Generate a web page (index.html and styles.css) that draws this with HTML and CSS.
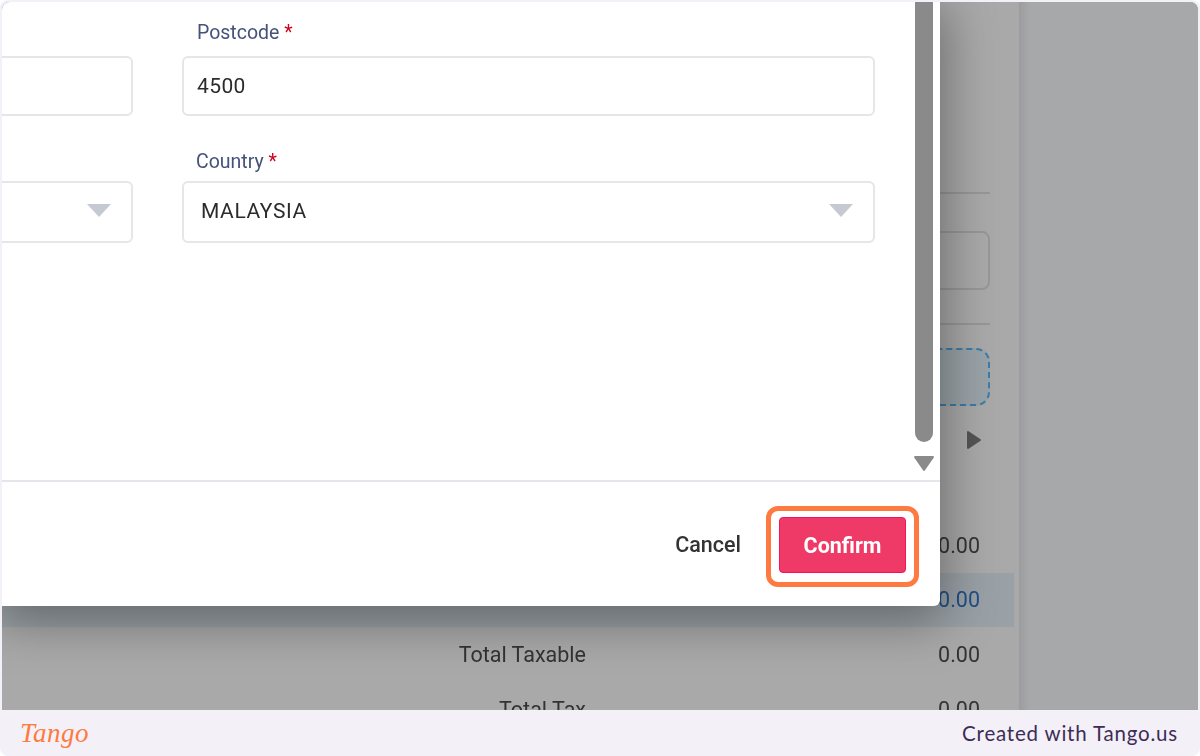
FILE: index.html
```html
<!DOCTYPE html>
<html lang="en">
<head>
<meta charset="utf-8">
<title>Confirm address</title>
<link rel="stylesheet" href="styles.css">
</head>
<body>
<div class="frame">
  <main class="shot">
    <section class="page">
      <div class="rule rule-first"></div>
      <div class="box"></div>
      <div class="rule rule-second"></div>
      <div class="dashed"></div>
      <div class="pager">
        <svg class="pager-arrow" width="16" height="20" viewBox="0 0 16 20"><path d="M2 2 L14 10 L2 18 Z" fill="#555" stroke="#555" stroke-width="2" stroke-linejoin="round"/></svg>
      </div>
      <div class="rows">
        <div class="row"><span class="row-label"></span><span class="row-value">0.00</span></div>
        <div class="row row-active"><span class="row-label"></span><span class="row-value">0.00</span></div>
        <div class="row"><span class="row-label">Total Taxable</span><span class="row-value">0.00</span></div>
        <div class="row"><span class="row-label">Total Tax</span><span class="row-value">0.00</span></div>
      </div>
    </section>
    <aside class="side"></aside>

    <section class="modal">
      <div class="modal-body">
        <div class="form">
          <div class="field field-first">
            <label class="label label-postcode">&nbsp;</label>
            <div class="input"></div>
          </div>
          <div class="field field-first">
            <label class="label label-postcode">Postcode <span class="req">*</span></label>
            <div class="input"><span class="value">4500</span></div>
          </div>
          <div class="field">
            <label class="label">&nbsp;</label>
            <div class="input input-select">
              <svg class="caret" width="24" height="14" viewBox="0 0 24 14"><path d="M0 0 H24 L12 13 Z" fill="#c4c9d2"/></svg>
            </div>
          </div>
          <div class="field">
            <label class="label label-country">Country <span class="req">*</span></label>
            <div class="input input-select">
              <span class="value value-select">MALAYSIA</span>
              <svg class="caret" width="24" height="14" viewBox="0 0 24 14"><path d="M0 0 H24 L12 13 Z" fill="#c4c9d2"/></svg>
            </div>
          </div>
        </div>
        <div class="scrollbar">
          <div class="thumb"></div>
          <svg class="scroll-down" width="22" height="17" viewBox="0 0 22 17"><path d="M2 2 H20 L11 15 Z" fill="#8a8a8a" stroke="#8a8a8a" stroke-width="2" stroke-linejoin="round"/></svg>
        </div>
      </div>
      <div class="modal-footer">
        <button class="btn-cancel" type="button">Cancel</button>
        <div class="highlight">
          <button class="btn-confirm" type="button">Confirm</button>
        </div>
      </div>
    </section>
  </main>
  <footer class="footer">
    <span class="logo">Tango</span>
    <span class="credit">Created with Tango.us</span>
  </footer>
</div>
</body>
</html>
```
FILE: styles.css
```css
* { box-sizing: border-box; }
html, body { margin: 0; padding: 0; }
body {
  width: 1200px;
  height: 756px;
  overflow: hidden;
  background: #fff;
  font-family: Roboto, "Liberation Sans", sans-serif;
}
.frame {
  display: flex;
  flex-direction: column;
  width: 1200px;
  height: 756px;
  border-radius: 8px;
  background: #f3f1f7;
}
.shot {
  position: relative;
  display: flex;
  flex: none;
  height: 708px;
  margin: 2px 2px 0;
  overflow: hidden;
  border-radius: 8px 8px 0 0;
  background: #a9a9a9;
  filter: blur(.35px);
}
.page {
  display: flex;
  flex-direction: column;
  flex: none;
  width: 1017px;
  padding: 190px 29px 0 0;
  background: #a9a9a9;
}
.page > * { flex: none; }
.rule { height: 2px; background: #979797; }
.box {
  height: 59px;
  margin: 37px 0 0 800px;
  border: 2px solid #979797;
  border-radius: 8px;
}
.rule-second { margin-top: 33px; }
.dashed {
  height: 58px;
  margin: 23px 0 0 800px;
  border: 2px dashed #3d7ba8;
  border-radius: 14px;
  background: #9aa3a8;
}
.pager { display: flex; justify-content: flex-end; padding: 24px 0 0; height: 46px; }
.pager-arrow { margin-right: 8px; }
.rows { margin: 66px -24px 0 0; }
.row {
  display: flex;
  align-items: center;
  justify-content: flex-end;
  height: 54.6px;
  padding-right: 34px;
  font-size: 21.5px;
  color: #333;
}
.row-active { background: rgba(40, 100, 150, 0.11); color: #1f4f86; }
.row-label { flex: 0 0 auto; }
.row-value { width: 394px; text-align: right; }
.side {
  flex: 1;
  background: linear-gradient(90deg, #9b9c9e, #a7a8aa 10px);
}

.modal {
  position: absolute;
  left: 0;
  top: 0;
  display: flex;
  flex-direction: column;
  width: 938px;
  height: 604px;
  border-radius: 0 0 6px 0;
  background: #fff;
  box-shadow: 0 10px 50px 6px rgba(0,0,0,.36);
}
.modal-body {
  display: flex;
  flex: none;
  height: 480px;
  border-bottom: 2px solid #e4e6ec;
}
.form {
  display: grid;
  grid-template-columns: 151px 693px;
  column-gap: 49px;
  align-content: start;
  flex: 1;
  margin-left: -20px;
  padding-top: 18px;
}
.field { display: flex; flex-direction: column; }
.field-first { height: 129px; }
.label {
  height: 32px;
  padding: 1px 0 0 14px;
  font-size: 19.5px;
  line-height: 24px;
  color: #46527a;
}
.label-postcode { height: 36px; padding-left: 15px; }
.req { color: #d0021b; }
.input {
  display: flex;
  align-items: center;
  height: 60px;
  padding: 0 13px 1px;
  border: 2px solid #e4e6e9;
  border-radius: 6px;
  background: #fff;
}
.input-select { height: 62px; padding: 0 20px 2px 17px; justify-content: space-between; }
.input-select .caret { margin-left: auto; }
.value { font-size: 21px; color: #2b2b2b; letter-spacing: .4px; }
.value-select { letter-spacing: .6px; }

.scrollbar {
  display: flex;
  flex-direction: column;
  align-items: center;
  flex: none;
  width: 25px;
  margin-right: 4px;
}
.thumb {
  flex: none;
  width: 18px;
  height: 440px;
  border-radius: 0 0 9px 9px;
  background: #8a8a8a;
}
.scroll-down { flex: none; margin-top: 13px; }

.modal-footer {
  display: flex;
  align-items: center;
  justify-content: flex-end;
  flex: 1;
  padding: 5px 21px 0 0;
}
.btn-cancel {
  margin: 0 25px 5px 0;
  padding: 0;
  border: 0;
  background: none;
  font: 500 21.5px Roboto, sans-serif;
  color: #333;
}
.highlight {
  display: flex;
  align-items: center;
  justify-content: center;
  width: 153px;
  height: 81px;
  padding-bottom: 3px;
  border: 5px solid #ff7a40;
  border-radius: 12px;
}
.btn-confirm {
  width: 127px;
  height: 56px;
  padding: 0;
  border: 1px solid #f0155a;
  border-radius: 4px;
  background: #ef3a68;
  font: 700 21.5px Roboto, sans-serif;
  color: #fff;
}

.footer {
  display: flex;
  align-items: center;
  justify-content: space-between;
  flex: 1;
  padding: 0 22px 0 20px;
}
.logo {
  font: italic 400 27px "Liberation Serif", serif;
  letter-spacing: .5px;
  color: #ff7a40;
}
.credit {
  font: 400 20.5px Lato, sans-serif;
  letter-spacing: .8px;
  color: #3e2c58;
}
```
